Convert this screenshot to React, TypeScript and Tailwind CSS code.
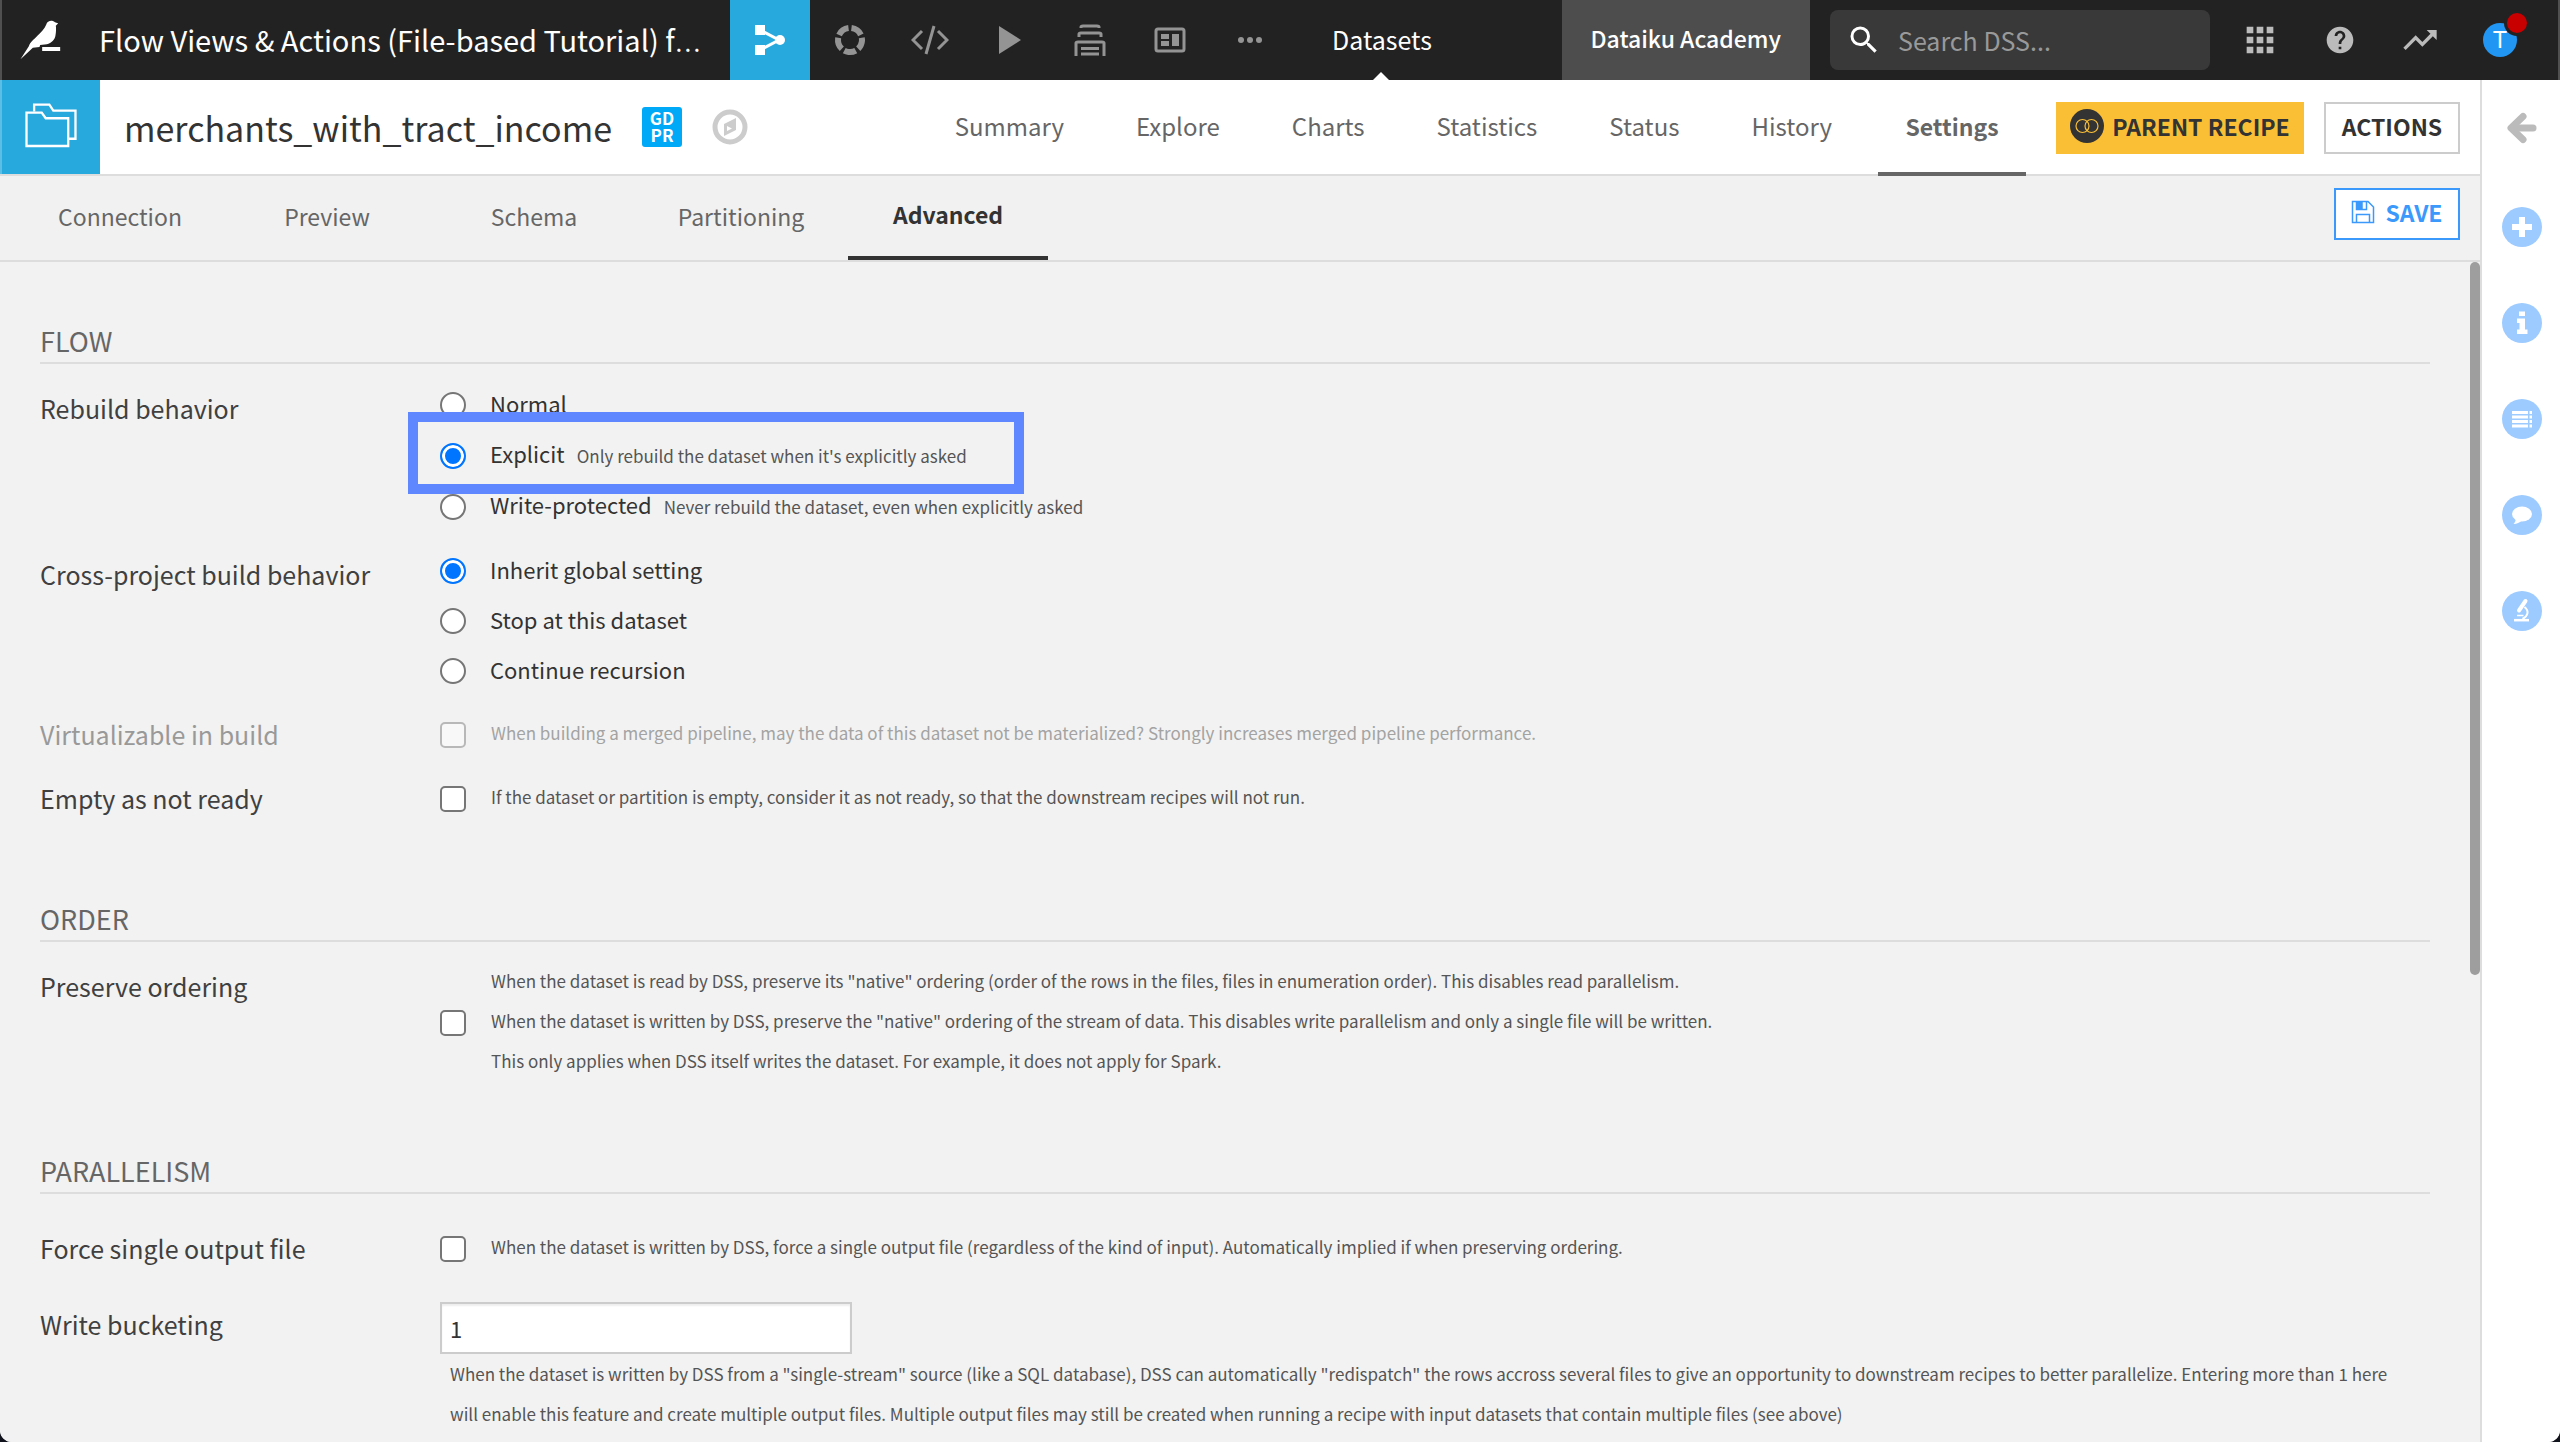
import React from "react";
import type { ReactNode } from "react";
import { MdApps, MdHelp, MdSearch, MdTrendingUp } from "react-icons/md";

/* ---------- icons ---------- */

const BirdLogo = () => (
  <svg viewBox="60 40 122 120" className="h-10 w-[41px]" fill="#fff">
    <path d="M61 158 L86 119 C90 106 102 98 111 88 C123 76 133 66 138 54 C141 44 150 41 158 43 C163 45 165 48 174 50 L167 57 C168 64 168 76 166 86 C164 100 154 109 140 113 L120 115 L118 121 L98 123 Z" />
    <rect x="126" y="121" width="54" height="12" />
  </svg>
);

const FlowIcon = () => (
  <svg viewBox="0 0 32 32" className="h-8 w-8">
    <path d="M6 6 L25 16 L6 26" fill="none" stroke="#fff" strokeWidth="3" />
    <rect x="1" y="1" width="10" height="10" fill="#fff" />
    <rect x="1" y="21" width="10" height="10" fill="#fff" />
    <circle cx="26" cy="16" r="5" fill="#fff" />
  </svg>
);

const RingIcon = () => (
  <svg viewBox="0 0 32 32" className="h-8 w-8">
    <circle
      cx="16"
      cy="16"
      r="12"
      fill="none"
      stroke="currentColor"
      strokeWidth="6"
      pathLength="100"
      strokeDasharray="16 4"
      transform="rotate(-83 16 16)"
    />
  </svg>
);

const CodeIcon = () => (
  <svg viewBox="0 0 38 30" className="h-[30px] w-[38px]" fill="none" stroke="currentColor" strokeWidth="3">
    <path d="M11 6 L2 15 L11 24 M27 6 L36 15 L27 24" />
    <path d="M23 1 L15 29" />
  </svg>
);

const PlayIcon = () => (
  <svg viewBox="0 0 32 32" className="h-8 w-8">
    <path d="M5 2 L27 16 L5 30 Z" fill="currentColor" />
  </svg>
);

const StackIcon = () => (
  <svg viewBox="0 0 32 32" className="h-8 w-8" fill="none" stroke="currentColor" strokeWidth="3">
    <path d="M7 4 V3 Q7 2 9 2 H23 Q25 2 25 3 V4" />
    <path d="M5 13 V10 Q5 9 7 9 H25 Q27 9 27 10 V13" />
    <path d="M2 32 V19 Q2 18 4 18 H28 Q30 18 30 19 V32" />
    <path d="M7 24.5 H25 M7 30 H25" />
  </svg>
);

const DashboardIcon = () => (
  <svg viewBox="0 0 32 26" className="h-[26px] w-8">
    <rect x="2" y="2" width="28" height="22" rx="2" fill="none" stroke="currentColor" strokeWidth="3" />
    <path d="M7 7h8v5H7z M7 14h8v5H7z M18 7h7v12h-7z" fill="currentColor" />
  </svg>
);

const DotsIcon = () => (
  <svg viewBox="0 0 24 6" className="h-[6px] w-6" fill="currentColor">
    <circle cx="3" cy="3" r="3" />
    <circle cx="12" cy="3" r="3" />
    <circle cx="21" cy="3" r="3" />
  </svg>
);

const FoldersIcon = () => (
  <svg viewBox="72 272 156 136" className="h-[45px] w-[52px]" fill="none" stroke="#fff" strokeWidth="7">
    <path d="M99 298 V277 H145 L157 295 H224 V380 H204" />
    <path d="M76 301 H122 L134 318 H202 V402 H76 Z" />
  </svg>
);

const CompassIcon = () => (
  <svg viewBox="0 0 36 36" className="h-9 w-9">
    <circle cx="18" cy="18" r="15" fill="none" stroke="#ccc" strokeWidth="5" />
    <path d="M24 9 V21 L12 27 V15 Z M15 17 V22 L20 19.500 Z" fill="#ccc" fillRule="evenodd" />
  </svg>
);

const RecipeIcon = () => (
  <svg viewBox="0 0 34 34" className="h-[34px] w-[34px]">
    <circle cx="17" cy="17" r="17" fill="#333" />
    <g fill="none" stroke="#fbbf36" strokeWidth="1.200">
      <circle cx="12.500" cy="17" r="6.500" />
      <circle cx="21.500" cy="17" r="6.500" />
    </g>
  </svg>
);

const SaveIcon = () => (
  <svg viewBox="0 0 24 24" className="h-6 w-6" fill="none" stroke="currentColor" strokeWidth="1.500">
    <path d="M1.500 1.500 H17 L22.500 7 V22.500 H1.500 Z" />
    <path d="M5.500 22 V14.500 H18.500 V22" />
    <path d="M5.500 2 V9.500 H15.500 V2" />
    <path d="M6 2 H11 V9 H6 Z" fill="currentColor" />
  </svg>
);

const ArrowIcon = () => (
  <svg viewBox="0 0 32 32" className="h-8 w-8" fill="none" stroke="#bbb" strokeWidth="7" strokeLinecap="round" strokeLinejoin="round">
    <path d="M17 4.500 L5 16 L17 27.500" />
    <path d="M7 16 H27" />
  </svg>
);

const PlusGlyph = () => <path d="M17 10h6v7h7v6h-7v7h-6v-7h-7v-6h7z" fill="#fff" />;
const InfoGlyph = () => (
  <path d="M17 8.500h6v4.500h-6z M15 15.500h8v11h2.500v4.500H15v-4.500h2.500v-6.500H15z" fill="#fff" />
);
const ListGlyph = () => (
  <path
    d="M10 12h16v3H10z M27.500 12H30v3h-2.500z M10 16.500h16v3H10z M27.500 16.500H30v3h-2.500z M10 21h16v3H10z M27.500 21H30v3h-2.500z M10 25.500h16v3H10z M27.500 25.500H30v3h-2.500z"
    fill="#fff"
  />
);
const ChatGlyph = () => (
  <g fill="#fff">
    <ellipse cx="20" cy="19" rx="10" ry="7.500" />
    <path d="M13.500 23 C14 26 13 27.500 11.500 29 C15 29 17.500 27.500 20 25.500 Z" />
  </g>
);
const ScopeGlyph = () => (
  <g fill="none" stroke="#fff">
    <path d="M23.500 10 L17 19.500" strokeWidth="4" strokeLinecap="round" />
    <path d="M22.500 16 C27.500 20 26 25 20.500 28" strokeWidth="2" />
    <path d="M15 24.500 H21.500" strokeWidth="1.500" />
    <path d="M12 29.200 H27" strokeWidth="2.500" />
  </g>
);

/* ---------- building blocks ---------- */

const headerItem = "flex w-20 shrink-0 items-center justify-center self-stretch";

function HeaderButton({ label, children }: { label: string; children: ReactNode }) {
  return (
    <button type="button" aria-label={label} className={`${headerItem} text-[#949494]`}>
      {children}
    </button>
  );
}

function MainTab({ children, active }: { children: ReactNode; active?: boolean }) {
  return (
    <a
      href="#"
      className={`flex h-24 items-center justify-center border-b-4 text-[#666] ${
        active ? "w-[148px] border-[#666] text-[23px] font-bold" : "border-transparent px-[26px] text-[24px]"
      }`}
    >
      {children}
    </a>
  );
}

function SubTab({ children, active }: { children: ReactNode; active?: boolean }) {
  return (
    <a
      href="#"
      className={`flex h-[84px] w-[200px] items-center justify-center pb-1 text-[23px] ${
        active ? "border-b-4 border-[#333] font-bold text-[#333]" : "text-[#666]"
      }`}
    >
      {children}
    </a>
  );
}

function SectionTitle({ children }: { children: ReactNode }) {
  return <h2 className="border-b-2 border-[#ddd] text-[27px] leading-[42px] text-[#666]">{children}</h2>;
}

type RowProps = { label: string; htmlFor?: string; disabled?: boolean; tall?: boolean; children: ReactNode };

function Row({ label, htmlFor, disabled, tall, children }: RowProps) {
  const cls = `text-[25px] leading-[40px] ${tall ? "pt-2" : "pt-1"} ${disabled ? "text-[#999]" : "text-[#404040]"}`;
  return (
    <div className="grid grid-cols-[400px_1fr]">
      {htmlFor ? (
        <label htmlFor={htmlFor} className={cls}>
          {label}
        </label>
      ) : (
        <div className={cls}>{label}</div>
      )}
      <div>{children}</div>
    </div>
  );
}

const radioClass =
  "h-[26px] w-[26px] shrink-0 appearance-none rounded-full border-2 border-[#767676] bg-white checked:border-[#0075ff] checked:bg-[#0075ff] checked:shadow-[inset_0_0_0_3px_white]";

type RadioProps = { name: string; label: string; hint?: string; checked?: boolean; highlight?: boolean };

function Radio({ name, label, hint, checked, highlight }: RadioProps) {
  return (
    <label className={`relative flex items-center gap-6 ${highlight ? "h-[52px]" : "h-[50px]"}`}>
      <input type="radio" name={name} defaultChecked={checked} className={radioClass} />
      <span className="pb-1 text-[22px] leading-[32px] text-[#333]">
        {label}
        {hint && <span className="ml-3 text-[17px] text-[#555]">{hint}</span>}
      </span>
      {highlight && (
        <span className="pointer-events-none absolute -left-8 -top-[18px] z-10 h-[82px] w-[616px] border-10 border-[#5f87ff]" />
      )}
    </label>
  );
}

function Check({ id, disabled, children }: { id: string; disabled?: boolean; children: ReactNode }) {
  return (
    <label className="flex min-h-[50px] items-center gap-[25px] py-[3px]">
      <input
        id={id}
        type="checkbox"
        disabled={disabled}
        className={`h-[26px] w-[26px] shrink-0 appearance-none rounded-[5px] border-2 ${
          disabled ? "border-[#b8b8b8] bg-[#f8f8f8]" : "border-[#767676] bg-white"
        }`}
      />
      <span className={`pb-1 text-[17px] leading-[40px] ${disabled ? "text-[#a3a3a3]" : "text-[#555]"}`}>{children}</span>
    </label>
  );
}

function SideButton({ label, children }: { label: string; children: ReactNode }) {
  return (
    <button type="button" aria-label={label} className="h-10 w-10">
      <svg viewBox="0 0 40 40" className="h-10 w-10">
        <circle cx="20" cy="20" r="20" fill="#9dcbff" />
        {children}
      </svg>
    </button>
  );
}

/* ---------- page ---------- */

export default function App() {
  return (
    <div className="h-screen bg-[#10121c] font-['Noto_Sans_CJK_SC','Noto_Sans',sans-serif] whitespace-nowrap">
      <div className="flex h-full flex-col overflow-hidden rounded-b-[12px] bg-white">
        <header className="flex h-20 shrink-0 items-center border-x-2 border-[#505050] bg-[#222] text-white">
          <a href="#" aria-label="Home" className="ml-[18px]">
            <BirdLogo />
          </a>
          <a href="#" className="ml-[38px] w-[631px] text-[29px]">
            Flow Views &amp; Actions (File-based Tutorial) f
            <span className="font-['Noto_Sans_CJK_KR'] text-[24px]">…</span>
          </a>
          <button type="button" aria-label="Flow" className={`${headerItem} bg-[#28a9dd]`}>
            <FlowIcon />
          </button>
          <HeaderButton label="Lab"><RingIcon /></HeaderButton>
          <HeaderButton label="Code"><CodeIcon /></HeaderButton>
          <HeaderButton label="Jobs"><PlayIcon /></HeaderButton>
          <HeaderButton label="Automation"><StackIcon /></HeaderButton>
          <HeaderButton label="Dashboards"><DashboardIcon /></HeaderButton>
          <HeaderButton label="More"><DotsIcon /></HeaderButton>
          <a href="#" className="relative ml-10 flex items-center self-stretch pl-[2px] text-[25px]">
            Datasets
            <span className="absolute bottom-0 left-1/2 h-0 w-0 border-x-8 border-b-8 border-x-transparent border-b-white -translate-x-1/2" />
          </a>
          <a href="#" className="ml-auto flex items-center self-stretch bg-[#4d4d4d] px-[29px] pb-1 text-[23px] font-medium">
            Dataiku Academy
          </a>
          <label className="ml-5 flex h-[60px] w-[380px] items-center rounded-lg bg-[#393939] pl-4">
            <MdSearch className="h-9 w-9 shrink-0 text-white" />
            <input
              type="text"
              aria-label="Search DSS"
              placeholder="Search DSS..."
              className="ml-4 w-full min-w-0 bg-transparent text-[25px] leading-[40px] text-white outline-none placeholder:text-[#999]"
            />
          </label>
          <div className="flex self-stretch pl-[10px] pr-[18px] text-[#bbb]">
            <button type="button" aria-label="Apps" className={headerItem}><MdApps className="h-10 w-10" /></button>
            <button type="button" aria-label="Help" className={headerItem}><MdHelp className="h-8 w-8" /></button>
            <button type="button" aria-label="Activity" className={headerItem}><MdTrendingUp className="h-10 w-10" /></button>
            <button type="button" aria-label="Profile" className={headerItem}>
              <span className="relative flex h-[34px] w-[34px] items-center justify-center rounded-full bg-[#2196f3] font-['Roboto'] text-[24px] text-white">
                T
                <span className="absolute -right-[13px] -top-[13px] h-[26px] w-[26px] rounded-full border-3 border-[#222] bg-[#c80000]" />
              </span>
            </button>
          </div>
        </header>

        <div className="flex min-h-0 flex-1">
          <div className="flex min-w-0 flex-1 flex-col">
            <div className="flex h-24 shrink-0 items-start border-b-2 border-[#ddd]">
              <div className="flex h-full items-center">
                <div className="flex h-full w-[100px] items-center justify-center border-l-2 border-[#5cbde5] bg-[#28a9dd] pb-1">
                  <FoldersIcon />
                </div>
                <h1 className="ml-6 text-[34px] text-[#333]">merchants_with_tract_income</h1>
                <span className="ml-[30px] flex h-10 w-10 flex-col items-center justify-center rounded-[3px] bg-[#00a9f7] pb-[2px] text-[17px] font-bold leading-[17px] text-white">
                  <span>GD</span>
                  <span>PR</span>
                </span>
                <a href="#" aria-label="Explore" className="ml-[30px]"><CompassIcon /></a>
              </div>
              <nav className="ml-auto flex gap-5">
                <MainTab>Summary</MainTab>
                <MainTab>Explore</MainTab>
                <MainTab>Charts</MainTab>
                <MainTab>Statistics</MainTab>
                <MainTab>Status</MainTab>
                <MainTab>History</MainTab>
                <MainTab active>Settings</MainTab>
              </nav>
              <div className="ml-[30px] mr-5 mt-[22px] flex gap-5 text-[23px] font-bold text-[#333]">
                <button type="button" className="flex h-[52px] w-[248px] items-center justify-center gap-2 bg-[#fbbf36] pb-1">
                  <RecipeIcon />
                  PARENT RECIPE
                </button>
                <button type="button" className="h-[52px] w-[136px] border-2 border-[#ccc] bg-white pb-1">
                  ACTIONS
                </button>
              </div>
            </div>

            <div className="flex h-[86px] shrink-0 items-start border-b-2 border-[#ddd] bg-[#f1f1f1]">
              <nav className="flex gap-[7px] pl-5">
                <SubTab>Connection</SubTab>
                <SubTab>Preview</SubTab>
                <SubTab>Schema</SubTab>
                <SubTab>Partitioning</SubTab>
                <SubTab active>Advanced</SubTab>
              </nav>
              <button
                type="button"
                className="ml-auto mr-5 mt-3 flex h-[52px] w-[126px] items-center justify-center gap-2.5 border-2 border-[#3b99fc] bg-white pb-1 text-[23px] font-bold text-[#3b99fc]"
              >
                <SaveIcon />
                SAVE
              </button>
            </div>

            <main className="relative min-h-0 flex-1 overflow-hidden bg-[#f2f2f2] pl-10 pr-[50px] pt-[58px]">
              <span className="absolute right-0 top-0 h-[713px] w-[10px] rounded-full bg-[#9e9e9e]" />

              <section>
                <SectionTitle>FLOW</SectionTitle>
                <div className="flex flex-col gap-[14px] pt-4">
                  <Row label="Rebuild behavior" tall>
                    <Radio name="rebuild" label="Normal" />
                    <Radio name="rebuild" label="Explicit" hint="Only rebuild the dataset when it's explicitly asked" checked highlight />
                    <Radio name="rebuild" label="Write-protected" hint="Never rebuild the dataset, even when explicitly asked" />
                  </Row>
                  <Row label="Cross-project build behavior" tall>
                    <Radio name="cross" label="Inherit global setting" checked />
                    <Radio name="cross" label="Stop at this dataset" />
                    <Radio name="cross" label="Continue recursion" />
                  </Row>
                  <Row label="Virtualizable in build" htmlFor="virtualizable" disabled>
                    <Check id="virtualizable" disabled>
                      When building a merged pipeline, may the data of this dataset not be materialized? Strongly increases merged pipeline performance.
                    </Check>
                  </Row>
                  <Row label="Empty as not ready" htmlFor="empty">
                    <Check id="empty">
                      If the dataset or partition is empty, consider it as not ready, so that the downstream recipes will not run.
                    </Check>
                  </Row>
                </div>
              </section>

              <section className="mt-[74px]">
                <SectionTitle>ORDER</SectionTitle>
                <div className="pt-4">
                  <Row label="Preserve ordering" htmlFor="ordering" tall>
                    <Check id="ordering">
                      When the dataset is read by DSS, preserve its "native" ordering (order of the rows in the files, files in enumeration order). This disables read parallelism.
                      <br />
                      When the dataset is written by DSS, preserve the "native" ordering of the stream of data. This disables write parallelism and only a single file will be written.
                      <br />
                      This only applies when DSS itself writes the dataset. For example, it does not apply for Spark.
                    </Check>
                  </Row>
                </div>
              </section>

              <section className="mt-[62px]">
                <SectionTitle>PARALLELISM</SectionTitle>
                <div className="flex flex-col gap-[26px] pt-[30px]">
                  <Row label="Force single output file" htmlFor="single">
                    <Check id="single">
                      When the dataset is written by DSS, force a single output file (regardless of the kind of input). Automatically implied if when preserving ordering.
                    </Check>
                  </Row>
                  <Row label="Write bucketing" htmlFor="bucketing">
                    <input
                      id="bucketing"
                      type="text"
                      defaultValue="1"
                      className="mt-[2px] block h-[52px] w-[412px] border-2 border-[#ccc] bg-white px-2 text-[22px] text-[#333] shadow-[inset_0_2px_2px_rgba(0,0,0,0.07)] outline-none"
                    />
                    <p className="whitespace-normal pl-[10px] pr-6 text-[17px] leading-[40px] text-[#555]">
                      When the dataset is written by DSS from a "single-stream" source (like a SQL database), DSS can automatically "redispatch" the rows accross several files to give an opportunity to downstream recipes to better parallelize. Entering more than 1 here will enable this feature and create multiple output files. Multiple output files may still be created when running a recipe with input datasets that contain multiple files (see above)
                    </p>
                  </Row>
                </div>
              </section>
            </main>
          </div>

          <aside className="flex w-20 shrink-0 flex-col items-center gap-14 border-l-2 border-[#ddd] bg-white pl-[2px] pt-8">
            <button type="button" aria-label="Open panel" className="h-8 w-8">
              <ArrowIcon />
            </button>
            <div className="mt-[7px] flex flex-col gap-14">
              <SideButton label="Actions"><PlusGlyph /></SideButton>
              <SideButton label="Details"><InfoGlyph /></SideButton>
              <SideButton label="Schema"><ListGlyph /></SideButton>
              <SideButton label="Discussions"><ChatGlyph /></SideButton>
              <SideButton label="Lab"><ScopeGlyph /></SideButton>
            </div>
          </aside>
        </div>
      </div>
    </div>
  );
}
